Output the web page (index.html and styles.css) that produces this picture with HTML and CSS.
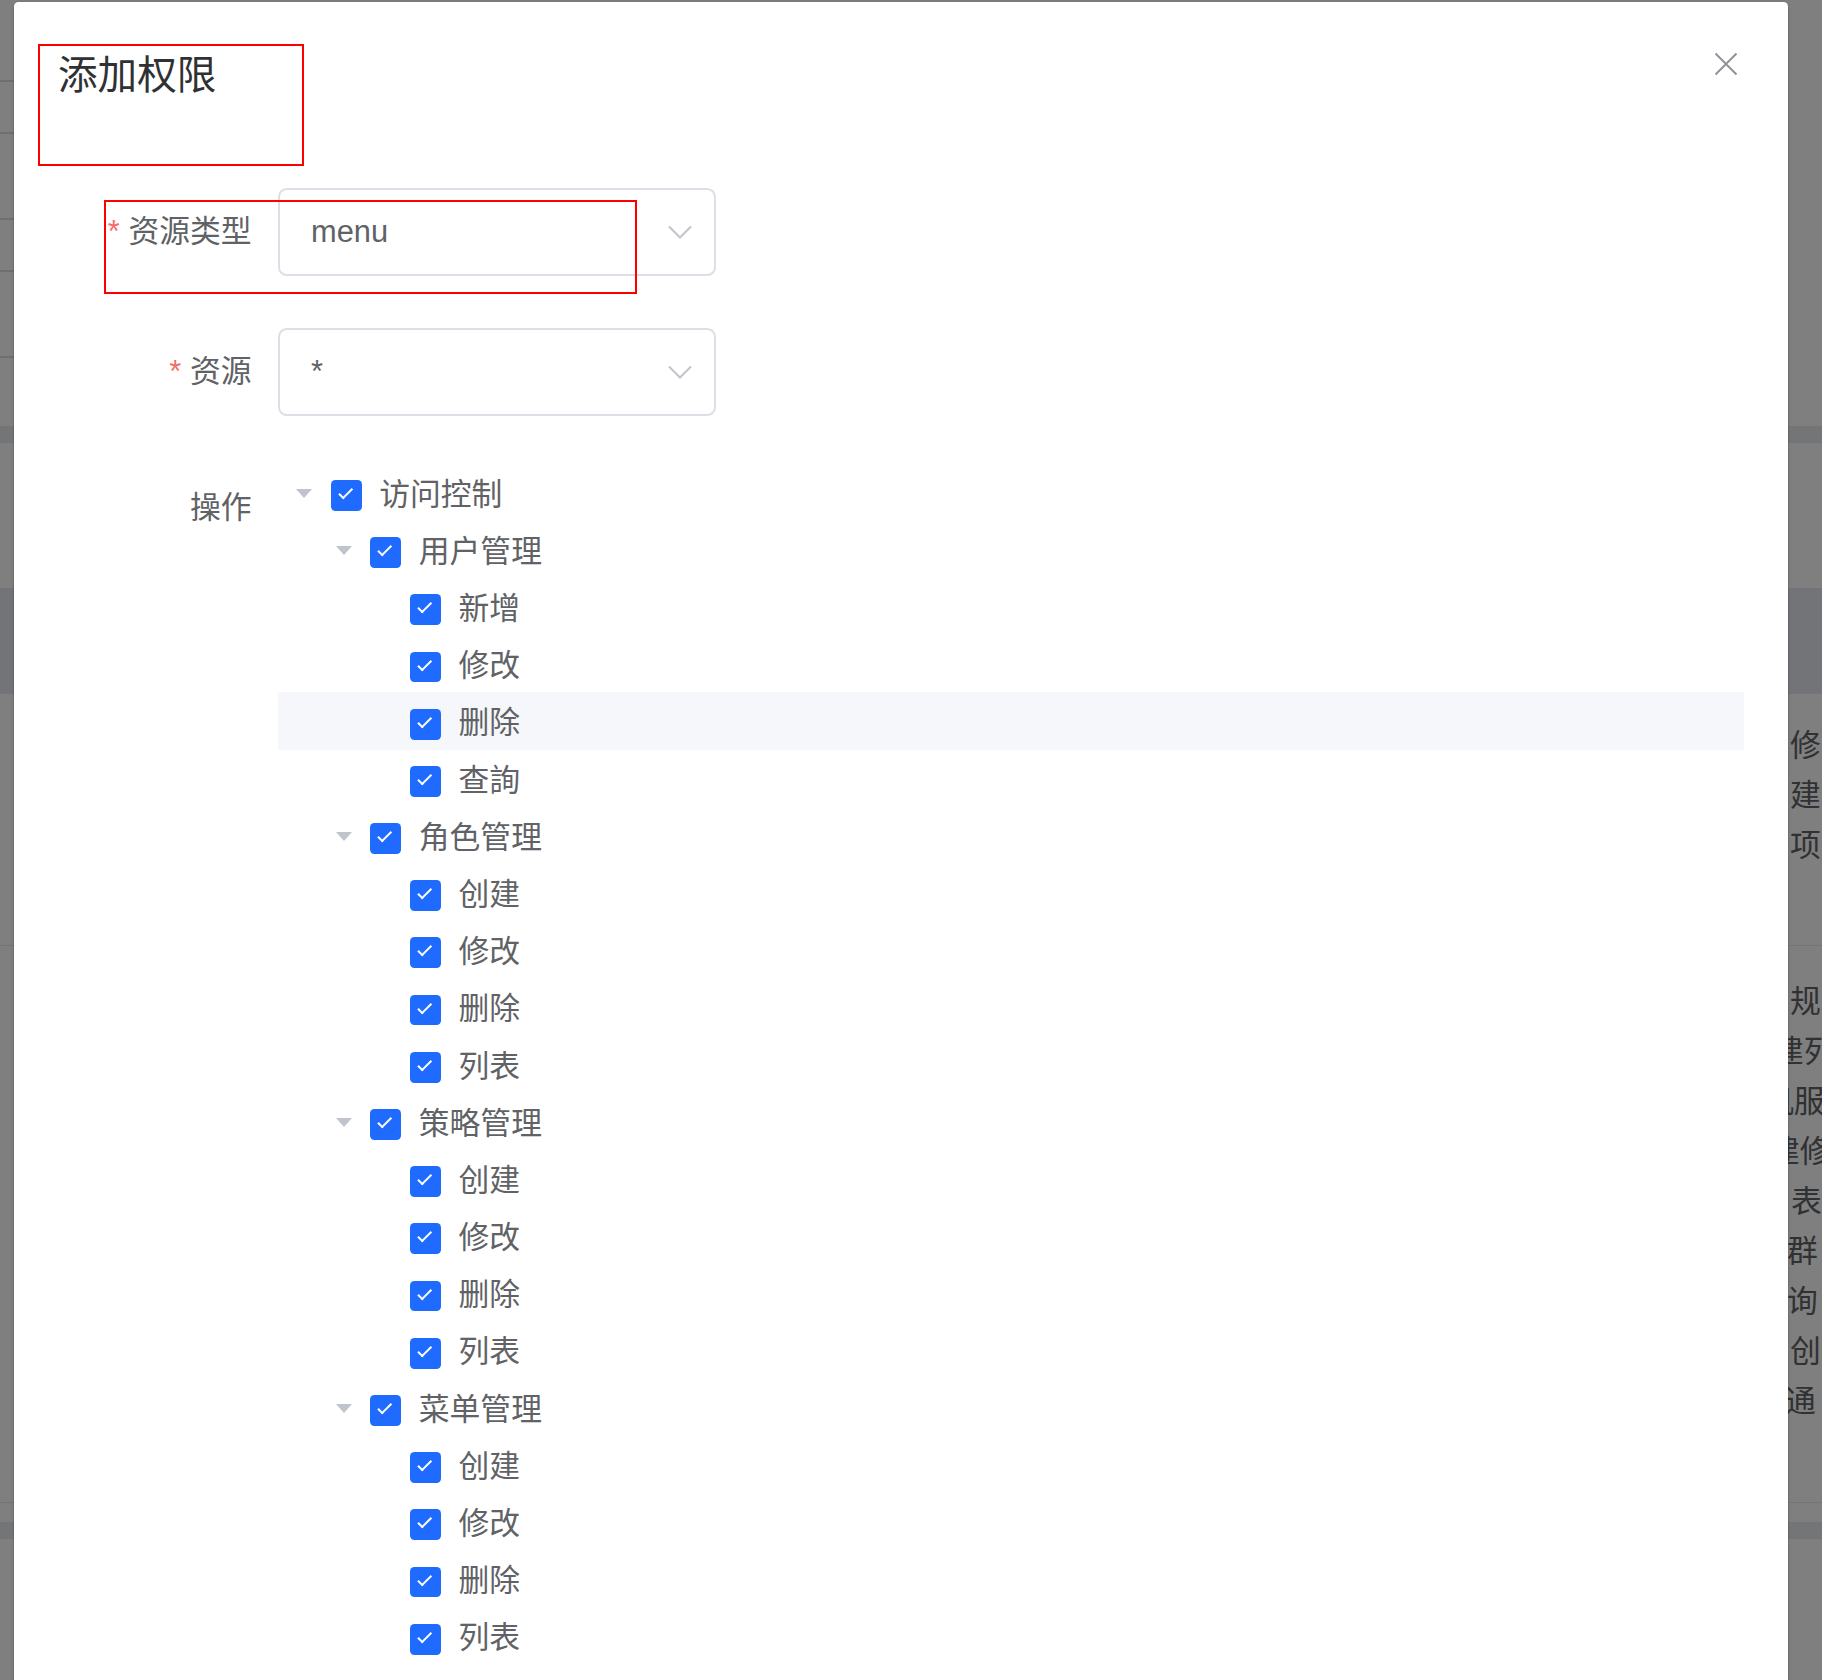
FILE: index.html
```html
<!DOCTYPE html>
<html lang="zh-CN">
<head>
<meta charset="utf-8">
<title>添加权限</title>
<link rel="stylesheet" href="styles.css">
</head>
<body>
<div class="page">
  <div class="bg-top">
    <div class="bg-side">
      <div class="side-item h80"></div>
      <div class="side-item h50"></div>
      <div class="side-item h84"></div>
      <div class="side-item h50"></div>
      <div class="side-item h84"></div>
    </div>
  </div>
  <div class="band band-a"></div>
  <div class="thead"></div>
  <div class="bg-rows rows-a">
    <div class="bg-row x0">修</div>
    <div class="bg-row x0">建</div>
    <div class="bg-row x0">项</div>
  </div>
  <div class="bg-line line-a"></div>
  <div class="bg-rows rows-b">
    <div class="bg-row x0">规</div>
    <div class="bg-row x1">建列</div>
    <div class="bg-row x2">机服</div>
    <div class="bg-row x3">建修</div>
    <div class="bg-row x5">表</div>
    <div class="bg-row x4">群</div>
    <div class="bg-row x4">询</div>
    <div class="bg-row x0">创</div>
    <div class="bg-row x6">通</div>
  </div>
  <div class="bg-line line-b"></div>
  <div class="band band-b"></div>
</div>

<div class="overlay"></div>

<div class="dialog">
  <div class="dlg-header">
    <span class="dlg-title">添加权限</span>
    <button class="dlg-close" type="button" aria-label="关闭">
      <svg width="24" height="24" viewBox="0 0 24 24"><path d="M1.5 1.5 L22.5 22.5 M22.5 1.5 L1.5 22.5" stroke="#909399" stroke-width="2" fill="none"/></svg>
    </button>
  </div>
  <div class="dlg-body">
    <div class="form-item item-1">
      <label class="form-label"><span class="req">*</span>资源类型</label>
      <div class="select">
        <span class="select-value">menu</span>
        <svg class="chev" width="24" height="14" viewBox="0 0 24 14"><path d="M1 1.5 L12 12.5 L23 1.5" stroke="#c0c4cc" stroke-width="2" fill="none"/></svg>
      </div>
    </div>
    <div class="form-item item-2">
      <label class="form-label"><span class="req">*</span>资源</label>
      <div class="select">
        <span class="select-value">*</span>
        <svg class="chev" width="24" height="14" viewBox="0 0 24 14"><path d="M1 1.5 L12 12.5 L23 1.5" stroke="#c0c4cc" stroke-width="2" fill="none"/></svg>
      </div>
    </div>
    <div class="form-item item-3">
      <label class="form-label">操作</label>
      <div class="tree">
        <div class="node lv1"><span class="caret"></span><span class="cb"></span><span class="node-label">访问控制</span></div>
        <div class="node lv2"><span class="caret"></span><span class="cb"></span><span class="node-label">用户管理</span></div>
        <div class="node lv3"><span class="caret leaf"></span><span class="cb"></span><span class="node-label">新增</span></div>
        <div class="node lv3"><span class="caret leaf"></span><span class="cb"></span><span class="node-label">修改</span></div>
        <div class="node lv3 hover"><span class="caret leaf"></span><span class="cb"></span><span class="node-label">删除</span></div>
        <div class="node lv3"><span class="caret leaf"></span><span class="cb"></span><span class="node-label">查詢</span></div>
        <div class="node lv2"><span class="caret"></span><span class="cb"></span><span class="node-label">角色管理</span></div>
        <div class="node lv3"><span class="caret leaf"></span><span class="cb"></span><span class="node-label">创建</span></div>
        <div class="node lv3"><span class="caret leaf"></span><span class="cb"></span><span class="node-label">修改</span></div>
        <div class="node lv3"><span class="caret leaf"></span><span class="cb"></span><span class="node-label">删除</span></div>
        <div class="node lv3"><span class="caret leaf"></span><span class="cb"></span><span class="node-label">列表</span></div>
        <div class="node lv2"><span class="caret"></span><span class="cb"></span><span class="node-label">策略管理</span></div>
        <div class="node lv3"><span class="caret leaf"></span><span class="cb"></span><span class="node-label">创建</span></div>
        <div class="node lv3"><span class="caret leaf"></span><span class="cb"></span><span class="node-label">修改</span></div>
        <div class="node lv3"><span class="caret leaf"></span><span class="cb"></span><span class="node-label">删除</span></div>
        <div class="node lv3"><span class="caret leaf"></span><span class="cb"></span><span class="node-label">列表</span></div>
        <div class="node lv2"><span class="caret"></span><span class="cb"></span><span class="node-label">菜单管理</span></div>
        <div class="node lv3"><span class="caret leaf"></span><span class="cb"></span><span class="node-label">创建</span></div>
        <div class="node lv3"><span class="caret leaf"></span><span class="cb"></span><span class="node-label">修改</span></div>
        <div class="node lv3"><span class="caret leaf"></span><span class="cb"></span><span class="node-label">删除</span></div>
        <div class="node lv3"><span class="caret leaf"></span><span class="cb"></span><span class="node-label">列表</span></div>
      </div>
    </div>
  </div>
</div>

<div class="mark mark-title"></div>
<div class="mark mark-type"></div>
</body>
</html>
```

FILE: styles.css
```css
html, body {
  margin: 0;
  padding: 0;
  width: 1822px;
  height: 1680px;
  overflow: hidden;
}
body {
  position: relative;
  background: #fff;
  font-family: "Liberation Sans", "Noto Sans CJK SC", sans-serif;
}

/* ---------- underlying page ---------- */
.page {
  width: 1822px;
  height: 1680px;
  display: flex;
  flex-direction: column;
  background: #fff;
  color: #606266;
  font-size: 30.8px;
}
.bg-top {
  height: 426px;
  display: flex;
  flex-shrink: 0;
}
.bg-side {
  width: 220px;
  display: flex;
  flex-direction: column;
}
.side-item {
  border-bottom: 2px solid #dcdfe6;
}
.h80 { height: 80px; }
.h50 { height: 50px; }
.h84 { height: 84px; }
.band {
  height: 17px;
  flex-shrink: 0;
  background: #e8ebef;
}
.band-a { margin-bottom: 145px; }
.band-b { margin-top: 19px; }
.thead {
  height: 106px;
  flex-shrink: 0;
  background: #e6e8ee;
  margin-bottom: 27px;
}
.bg-rows {
  display: flex;
  flex-direction: column;
  flex-shrink: 0;
}
.bg-row {
  height: 50px;
  line-height: 50px;
  white-space: nowrap;
}
.x0 { padding-left: 1790px; }
.x1 { padding-left: 1773px; }
.x2 { padding-left: 1763px; }
.x3 { padding-left: 1769px; }
.x4 { padding-left: 1787px; }
.x5 { padding-left: 1791px; }
.x6 { padding-left: 1785px; }
.rows-a { margin-bottom: 74px; }
.bg-line {
  height: 1px;
  flex-shrink: 0;
  background: #e4e7ed;
}
.line-a { margin-bottom: 31px; }
.line-b { margin-top: 75px; }

.overlay {
  position: absolute;
  left: 0;
  top: 0;
  width: 1822px;
  height: 1680px;
  background: rgba(0, 0, 0, 0.5);
}

/* ---------- dialog ---------- */
.dialog {
  position: absolute;
  left: 14px;
  top: 2px;
  width: 1774px;
  height: 1720px;
  background: #fff;
  border-radius: 4.4px;
  box-shadow: 0 1px 3px rgba(0, 0, 0, 0.3);
}
.dlg-header {
  position: relative;
  padding: 47px 44px 19px;
}
.dlg-title {
  display: block;
  font-size: 39.6px;
  line-height: 52.8px;
  color: #303133;
}
.dlg-close {
  position: absolute;
  top: 44px;
  right: 44px;
  width: 35.2px;
  height: 35.2px;
  padding: 0;
  border: 0;
  background: transparent;
  display: flex;
  align-items: center;
  justify-content: center;
}
.dlg-close svg { display: block; }

.dlg-body {
  padding: 66.8px 44px 66px;
  color: #606266;
  font-size: 30.8px;
}
.form-item {
  display: flex;
  align-items: flex-start;
}
.item-1 { margin-bottom: 52.4px; }
.item-2 { margin-bottom: 47.6px; }
.form-label {
  width: 220px;
  flex-shrink: 0;
  box-sizing: border-box;
  padding-right: 26.4px;
  text-align: right;
  line-height: 88px;
  font-size: 30.8px;
  color: #606266;
}
.req {
  color: #f56c6c;
  margin-right: 8.8px;
}
.select {
  width: 438px;
  height: 88px;
  box-sizing: border-box;
  border: 2px solid #dcdfe6;
  border-radius: 8.8px;
  display: flex;
  align-items: center;
  padding: 0 22px 0 31px;
}
.select-value {
  flex: 1;
  font-size: 30.8px;
  color: #606266;
}
.chev { display: block; flex-shrink: 0; }

/* ---------- tree ---------- */
.tree {
  flex: 1;
  display: flex;
  flex-direction: column;
}
.node {
  height: 57.2px;
  display: flex;
  align-items: center;
}
.node.hover { background: #f5f7fa; }
.lv2 { padding-left: 39.6px; }
.lv3 { padding-left: 79.2px; }
.caret {
  width: 52.8px;
  height: 20px;
  flex-shrink: 0;
  display: flex;
  align-items: center;
  justify-content: center;
  margin-top: 2px;
}
.caret::before {
  content: "";
  width: 0;
  height: 0;
  border-left: 8px solid transparent;
  border-right: 8px solid transparent;
  border-top: 9px solid #c0c4cc;
}
.caret.leaf::before { visibility: hidden; }
.cb {
  position: relative;
  width: 30.8px;
  height: 30.8px;
  flex-shrink: 0;
  box-sizing: border-box;
  border-radius: 4.4px;
  background: #1f6bff;
  margin: 6.4px 17.6px 0 0;
}
.cb::after {
  content: "";
  position: absolute;
  left: 11px;
  top: 5px;
  width: 5.4px;
  height: 12.4px;
  border: 2.2px solid #fff;
  border-left: 0;
  border-top: 0;
  transform: rotate(45deg);
}
.node-label {
  font-size: 30.8px;
  line-height: 40px;
  margin-top: 5px;
  color: #606266;
  white-space: nowrap;
}

/* ---------- annotation boxes ---------- */
.mark {
  position: absolute;
  box-sizing: border-box;
  border: 2px solid #ff0000;
}
.mark-title {
  left: 38px;
  top: 44px;
  width: 266px;
  height: 122px;
}
.mark-type {
  left: 104px;
  top: 200px;
  width: 533px;
  height: 94px;
}
```
